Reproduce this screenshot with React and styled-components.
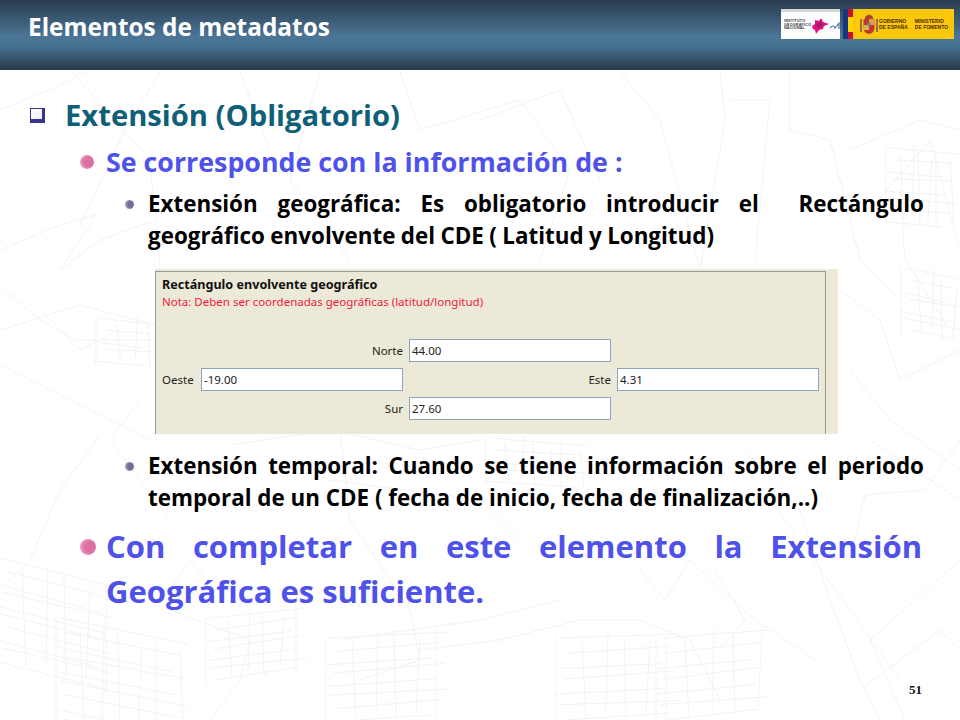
import React from 'react';
import styled, { createGlobalStyle } from 'styled-components';

const GlobalStyle = createGlobalStyle`
  html, body { margin: 0; padding: 0; background: #fff; }
  body { font-family: "Open Sans", "Liberation Sans", sans-serif; }
`;

const Slide = styled.div`
  position: relative;
  width: 960px;
  height: 720px;
  overflow: hidden;
  display: flex;
  flex-direction: column;
  background: #fff;
`;

const MapBack = styled.svg`
  position: absolute;
  left: 0;
  top: 0;
  width: 960px;
  height: 720px;
  fill: none;
  stroke: #f3f3f6;
  stroke-width: 1;
`;

const Header = styled.header`
  position: relative;
  height: 70px;
  flex: none;
  display: flex;
  align-items: flex-start;
  justify-content: space-between;
  box-sizing: border-box;
  padding: 9px 6px 0 28px;
  background: linear-gradient(#2b3d4e 0%, #3b5a75 28%, #4a7596 52%, #46708f 68%, #2f4557 92%, #283a48 100%);
`;

const Title = styled.h1`
  margin: 0;
  font-size: 24.4px;
  line-height: 36px;
  font-weight: 700;
  color: #fff;
`;

const Logos = styled.div`
  display: flex;
  gap: 3px;
  height: 30px;
`;

const IgnLogo = styled.div`
  position: relative;
  width: 59px;
  box-sizing: border-box;
  background: linear-gradient(#d4d6d6 0 3px, #fff 3px);
  display: flex;
  align-items: center;
  padding: 3px 0 0 3px;
`;

const IgnName = styled.span`
  font: 700 3.7px/3.9px "Liberation Sans", sans-serif;
  color: #333;
  letter-spacing: 0.2px;
  width: 27px;
  flex: none;
`;

const GovLogo = styled.div`
  display: flex;
  align-items: center;
  background: #fdc70c;
  width: 111px;
`;

const FlagStrip = styled.div`
  align-self: stretch;
  width: 10px;
  margin-right: 6px;
  background: linear-gradient(#c8102e 0 8px, #ffd400 8px 23px, #c8102e 23px);
  box-shadow: inset 5px 0 0 #17357d;
`;

const GovText = styled.div`
  display: flex;
  gap: 7px;
  align-items: center;
  font: 700 5px/6px "Liberation Sans", sans-serif;
  color: #4a2e10;
  white-space: nowrap;
`;

const Content = styled.main`
  position: relative;
  padding-top: 27px;
`;

const Item = styled.div`
  display: flex;
  margin-left: ${(p) => p.$left}px;
  margin-top: ${(p) => p.$top || 0}px;
  width: ${(p) => p.$width}px;
`;

const Gutter = styled.div`
  flex: none;
  width: ${(p) => p.$width}px;
  height: ${(p) => p.$height}px;
  display: flex;
  align-items: center;
`;

const SquareBullet = styled.span`
  display: block;
  width: 11px;
  height: 10px;
  border: 1.5px solid #39348f;
  border-bottom-width: 4px;
  border-right-width: 3px;
  background: linear-gradient(135deg, #fff, #eeeef6);
`;

const Dot = styled.span`
  display: block;
  width: ${(p) => p.$size}px;
  height: ${(p) => p.$size}px;
  border-radius: 50%;
  filter: blur(0.6px);
  background: radial-gradient(circle at 62% 50%, ${(p) => p.$color} 40%, ${(p) => p.$edge} 100%);
`;

const Heading = styled.div`
  font-size: 29.2px;
  line-height: 36px;
  font-weight: 700;
  color: #0f5f78;
  white-space: nowrap;
`;

const SubHeading = styled.div`
  font-size: 26.8px;
  line-height: 30px;
  font-weight: 700;
  color: #4f52ea;
  white-space: nowrap;
`;

const Body = styled.div`
  flex: 1;
  font-size: 22.4px;
  line-height: 32px;
  font-weight: 700;
  color: #000;
`;

const Conclusion = styled.div`
  flex: 1;
  font-size: 31px;
  line-height: 45px;
  font-weight: 700;
  color: #4f52ea;
`;

// one line of a paragraph; $full stretches the words to both edges
const Line = styled.span`
  display: block;
  text-align: ${(p) => (p.$full ? 'justify' : 'left')};
  text-align-last: ${(p) => (p.$full ? 'justify' : 'left')};
  white-space: ${(p) => (p.$full ? 'normal' : 'nowrap')};
  word-spacing: ${(p) => p.$tight || 0}px;
`;

const FormShot = styled.section`
  margin: 17px 0 0 155px;
  width: 683px;
  height: 165px;
  box-sizing: border-box;
  padding: 2px 12px 0 0;
  background: #ece9d8;
  display: flex;
  font-family: "Noto Sans", "Liberation Sans", sans-serif;
  color: #222;
`;

const FormBox = styled.div`
  flex: 1;
  border: 1px solid #9b9b90;
  border-bottom: 0;
  padding: 5px 6px 0 6px;
`;

const FormTitle = styled.div`
  font-size: 12.6px;
  font-weight: 700;
  line-height: 15px;
  color: #111;
`;

const FormNote = styled.div`
  font-size: 11.5px;
  line-height: 18px;
  margin-top: 1px;
  color: #f0183c;
`;

const FormGrid = styled.div`
  margin-top: 28px;
  display: grid;
  grid-template-columns: 33px 202px 202px 202px;
  grid-auto-rows: 23px;
  column-gap: 6px;
  row-gap: 6px;
`;

const FieldLabel = styled.label`
  grid-column: ${(p) => p.$col};
  font-size: 11.5px;
  line-height: 23px;
  text-align: ${(p) => p.$align || 'right'};
`;

const FieldValue = styled.div`
  grid-column: ${(p) => p.$col};
  box-sizing: border-box;
  border: 1px solid #8ea3bf;
  background: #fff;
  font-size: 11.5px;
  line-height: 21px;
  padding-left: 2px;
`;

const Footer = styled.footer`
  position: relative;
  margin-top: auto;
  height: 38px;
  padding-right: 38px;
  text-align: right;
  font: 700 13px/16px "Liberation Serif", serif;
  color: #111;
`;

// long roads and parcel edges of the faint map behind the slide
const mapLines = [
  'M0 250 L60 225 L96 215 L60 270 L100 240 L150 222',
  'M70 70 L150 160 L160 268',
  'M160 72 L125 130 L80 225',
  'M0 330 L80 305 L155 325',
  'M40 310 L80 350 L120 330',
  'M5 290 L40 320 L75 340 L155 340',
  'M0 365 L70 400 L150 440',
  'M100 435 L60 490 L30 560 L0 590',
  'M140 400 L110 440 L170 520',
  'M120 600 L170 590 L190 560 L215 590',
  'M170 610 L250 640 L240 680 L210 720',
  'M230 445 L330 430 L420 450 L480 440',
  'M340 430 L350 520 L410 610 L420 660 L360 680',
  'M330 480 L480 500 L520 540',
  'M340 640 L480 620 L560 600',
  'M420 650 L500 640 L580 620 L640 620 L690 640 L720 700',
  'M640 570 L665 600 L690 560 L755 620 L815 660',
  'M715 570 L745 620 L720 650',
  'M740 445 L800 510 L830 600 L860 680 L880 720',
  'M770 500 L850 610 L900 680',
  'M860 690 L940 630 L960 650',
  'M850 560 L865 495 L925 490 L960 440',
  'M905 720 L870 640 L960 560',
  'M870 440 L960 500',
  'M240 72 L270 150',
  'M320 72 L290 180 L350 260',
  'M400 72 L420 130 L520 100 L570 170 L540 260',
  'M480 120 L560 90 L600 180',
  'M620 72 L660 120 L700 270',
  'M720 72 L725 120 L700 270',
  'M730 100 L770 100 L755 260',
  'M790 72 L790 130 L830 140 L860 260 L900 300',
  'M850 150 L920 120 L960 130',
  'M870 210 L930 140 L960 250',
  'M900 190 L905 260 L950 330',
  'M840 290 L880 320 L900 380 L960 350',
  'M850 370 L890 420 L960 470',
  'M0 110 L50 90 L90 70',
];

// dense parcel blocks: [x, y, width, height, rows, columns, slant]
const mapBlocks = [
  [0, 560, 110, 100, 9, 5, 28],
  [60, 620, 120, 100, 8, 6, 24],
  [210, 620, 90, 60, 6, 5, -12],
  [330, 640, 110, 80, 7, 5, -8],
  [560, 640, 110, 80, 6, 5, -6],
  [660, 640, 100, 80, 6, 4, -10],
  [890, 150, 60, 70, 7, 6, 4],
  [905, 270, 50, 60, 6, 4, 10],
  [490, 440, 90, 40, 4, 6, 6],
  [100, 320, 50, 40, 4, 3, 5],
];

// uneven spacing so the blocks read as parcels and not as a grid
const wobble = (n) => ((n * 7) % 5) - 2;

function parcelPaths([x, y, w, h, rows, cols, slant]) {
  const paths = [];
  for (let r = 0; r <= rows; r++) {
    const py = y + (h * r) / rows + wobble(r);
    paths.push(`M${x + wobble(r + 1) * 3} ${py} L${x + w - wobble(r) * 4} ${py + slant + wobble(r + 2)}`);
  }
  for (let c = 0; c <= cols; c++) {
    const px = x + (w * c) / cols + wobble(c) * 2;
    const dy = (slant * c) / cols;
    paths.push(`M${px} ${y + dy + wobble(c + 3) * 3} L${px + wobble(c + 1) * 2} ${y + h + dy - wobble(c) * 3}`);
  }
  return paths;
}

function IgnMark() {
  return (
    <svg width="19" height="18" viewBox="0 0 19 18">
      <path d="M1 9 L4 7 L4 3 L8 4 L10 1 L12 5 L18 7 L13 9 L12 12 L8 13 L5 17 L4 13 L2 12 Z" fill="#e0107f" />
      <path d="M5 8 L10 5 L12 8 L8 11 Z" fill="#8d1f6a" />
    </svg>
  );
}

function IgnSub() {
  return (
    <svg width="10" height="8" viewBox="0 0 10 8">
      <path d="M0 6 Q3 2 5 6 Q7 4 9 1 L9 7" fill="none" stroke="#4a76b0" strokeWidth="1.2" />
    </svg>
  );
}

function Crest() {
  return (
    <svg width="20" height="24" viewBox="0 0 20 24">
      <rect x="1" y="7" width="2" height="13" fill="#8c7648" />
      <rect x="17" y="7" width="2" height="13" fill="#8c7648" />
      <path d="M6 5 Q10 0 14 5 L14 7 L6 7 Z" fill="#a8402e" />
      <path d="M4.5 7 H15.5 V16 Q15.5 21 10 22 Q4.5 21 4.5 16 Z" fill="#c4352a" />
      <rect x="10" y="7" width="5.5" height="6" fill="#d9a24a" />
      <rect x="4.5" y="13" width="5.5" height="5" fill="#e0b050" />
      <circle cx="10" cy="12.5" r="2" fill="#6d7fb0" />
    </svg>
  );
}

export default function App() {
  return (
    <Slide>
      <GlobalStyle />
      <MapBack viewBox="0 0 960 720">
        {mapLines.map((d) => (
          <path key={d} d={d} />
        ))}
        {mapBlocks.flatMap(parcelPaths).map((d, i) => (
          <path key={i} d={d} />
        ))}
      </MapBack>

      <Header>
        <Title>Elementos de metadatos</Title>
        <Logos>
          <IgnLogo>
            <IgnName>INSTITUTO GEOGRÁFICO NACIONAL</IgnName>
            <IgnMark />
            <IgnSub />
          </IgnLogo>
          <GovLogo>
            <FlagStrip />
            <Crest />
            <GovText>
              <span>GOBIERNO<br />DE ESPAÑA</span>
              <span>MINISTERIO<br />DE FOMENTO</span>
            </GovText>
          </GovLogo>
        </Logos>
      </Header>

      <Content>
        <Item $left={30} $width={370}>
          <Gutter $width={35} $height={36}><SquareBullet /></Gutter>
          <Heading>Extensión (Obligatorio)</Heading>
        </Item>
        <Item $left={80} $top={14} $width={600}>
          <Gutter $width={26} $height={30}><Dot $size={14} $color="#dc6fa3" $edge="#f3c3da" /></Gutter>
          <SubHeading>Se corresponde con la información de :</SubHeading>
        </Item>
        <Item $left={125} $top={11} $width={799}>
          <Gutter $width={23} $height={32}><Dot $size={9} $color="#6f6f98" $edge="#d5d5e2" /></Gutter>
          <Body>
            <Line $full>Extensión geográfica: Es obligatorio introducir el &nbsp;Rectángulo</Line>
            <Line $tight={-0.4}>geográfico envolvente del CDE ( Latitud y Longitud)</Line>
          </Body>
        </Item>

        <FormShot>
          <FormBox>
            <FormTitle>Rectángulo envolvente geográfico</FormTitle>
            <FormNote>Nota: Deben ser coordenadas geográficas (latitud/longitud)</FormNote>
            <FormGrid>
              <FieldLabel $col="1 / 3">Norte</FieldLabel>
              <FieldValue $col="3">44.00</FieldValue>
              <span />
              <FieldLabel $col="1" $align="left">Oeste</FieldLabel>
              <FieldValue $col="2">-19.00</FieldValue>
              <FieldLabel $col="3">Este</FieldLabel>
              <FieldValue $col="4">4.31</FieldValue>
              <FieldLabel $col="1 / 3">Sur</FieldLabel>
              <FieldValue $col="3">27.60</FieldValue>
            </FormGrid>
          </FormBox>
        </FormShot>

        <Item $left={125} $top={16} $width={799}>
          <Gutter $width={23} $height={32}><Dot $size={9} $color="#6f6f98" $edge="#d5d5e2" /></Gutter>
          <Body>
            <Line $full>Extensión temporal: Cuando se tiene información sobre el periodo</Line>
            <Line>temporal de un CDE ( fecha de inicio, fecha de finalización,..)</Line>
          </Body>
        </Item>
        <Item $left={80} $top={10} $width={842}>
          <Gutter $width={26} $height={45}><Dot $size={16} $color="#dc6fa3" $edge="#f3c3da" /></Gutter>
          <Conclusion>
            <Line $full>Con completar en este elemento la Extensión</Line>
            <Line>Geográfica es suficiente.</Line>
          </Conclusion>
        </Item>
      </Content>

      <Footer>51</Footer>
    </Slide>
  );
}
